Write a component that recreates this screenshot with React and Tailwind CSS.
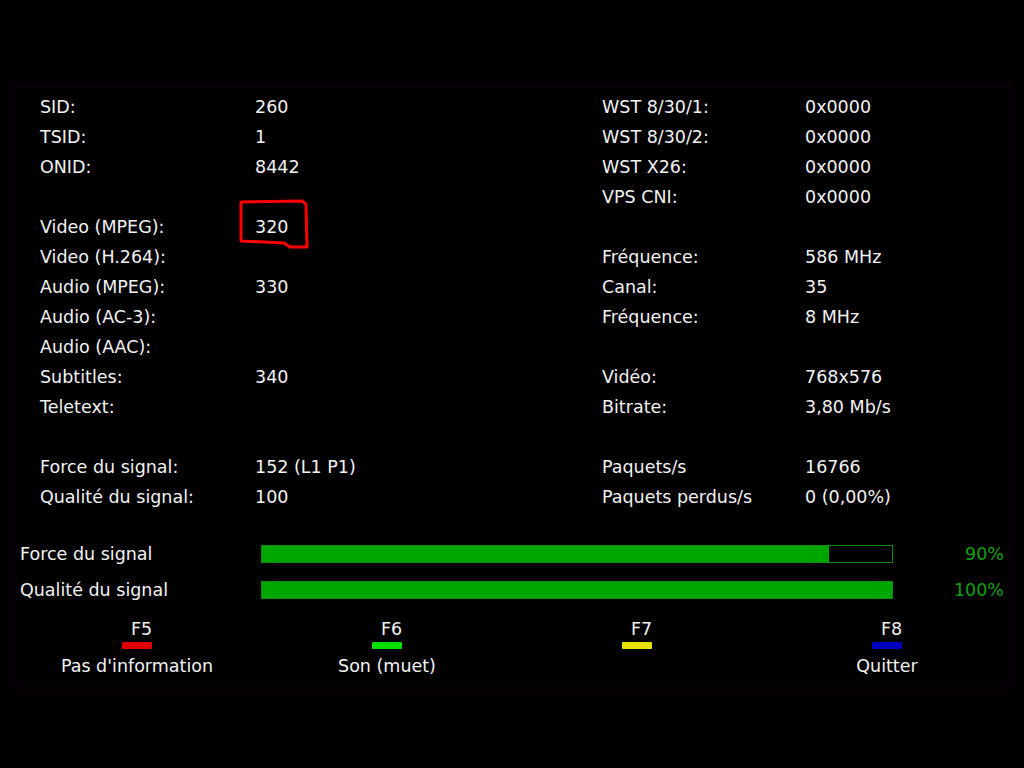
import React from "react";

const rows = [
  ["SID:", "260", "WST 8/30/1:", "0x0000"],
  ["TSID:", "1", "WST 8/30/2:", "0x0000"],
  ["ONID:", "8442", "WST X26:", "0x0000"],
  ["", "", "VPS CNI:", "0x0000"],
  ["Video (MPEG):", "320", "", ""],
  ["Video (H.264):", "", "Fréquence:", "586 MHz"],
  ["Audio (MPEG):", "330", "Canal:", "35"],
  ["Audio (AC-3):", "", "Fréquence:", "8 MHz"],
  ["Audio (AAC):", "", "", ""],
  ["Subtitles:", "340", "Vidéo:", "768x576"],
  ["Teletext:", "", "Bitrate:", "3,80 Mb/s"],
  ["", "", "", ""],
  ["Force du signal:", "152 (L1 P1)", "Paquets/s", "16766"],
  ["Qualité du signal:", "100", "Paquets perdus/s", "0 (0,00%)"],
];

const meters = [
  { label: "Force du signal", value: 90 },
  { label: "Qualité du signal", value: 100 },
];

const keys = [
  { key: "F5", color: "bg-[#e00000]", text: "Pas d'information" },
  { key: "F6", color: "bg-[#00e000]", text: "Son (muet)" },
  { key: "F7", color: "bg-[#e8e000]", text: "" },
  { key: "F8", color: "bg-[#0000c0]", text: "Quitter" },
];

function Meter({ label, value }) {
  return (
    <div className="flex items-center h-[36px]">
      <div className="w-[247px] pl-[6px] leading-[36px]">{label}</div>
      <div className="w-[632px] h-[18px] border border-[#0a900a] bg-black">
        <div className="h-full bg-[#00a600]" style={{ width: `${value}%` }} />
      </div>
      <div className="flex-1 text-right pr-[4px] text-[#10a010]">{value}%</div>
    </div>
  );
}

export default function App() {
  return (
    <div
      className="w-[1024px] h-[768px] bg-black text-[#f2f2f2] text-[17.5px] pt-[82px] pl-[8px]"
      style={{ fontFamily: '"DejaVu Sans", "Verdana", sans-serif' }}
    >
      <div className="w-[1006px] h-[608px] bg-[#070007] p-[6px]">
        <div className="relative w-full h-full bg-black">
          {/* info table */}
          <div className="grid grid-cols-[215px_347px_203px_1fr] pl-[26px] pt-[4px]">
            {rows.map((r, i) => (
              <React.Fragment key={i}>
                {r.map((cell, j) => (
                  <div key={j} className="h-[30px] leading-[30px] whitespace-nowrap">
                    {cell}
                  </div>
                ))}
              </React.Fragment>
            ))}
          </div>

          {/* hand-drawn marker around the video PID */}
          <svg
            className="absolute left-0 top-0 pointer-events-none"
            width="1000"
            height="600"
            viewBox="14 88 1000 600"
          >
            <path
              d="M241 202 L302 201 L306 204 L307 247 L290 247 L284 243 L241 241 Z"
              fill="none"
              stroke="#ff0000"
              strokeWidth="3"
              strokeLinejoin="round"
            />
          </svg>

          {/* signal meters */}
          <div className="mt-[24px]">
            {meters.map((m) => (
              <Meter key={m.label} {...m} />
            ))}
          </div>

          {/* colour keys */}
          <div className="flex mt-[11px] -ml-[2px]">
            {keys.map((k) => (
              <div key={k.key} className="w-[250px] shrink-0 flex flex-col items-center">
                <div className="h-[20px] leading-[20px] pl-[9px]">{k.key}</div>
                <div className={`w-[30px] h-[7px] mt-[3px] rounded-[1px] ${k.color}`} />
                <div className="h-[22px] leading-[22px] mt-[6px] whitespace-nowrap">{k.text}</div>
              </div>
            ))}
          </div>
        </div>
      </div>
    </div>
  );
}
